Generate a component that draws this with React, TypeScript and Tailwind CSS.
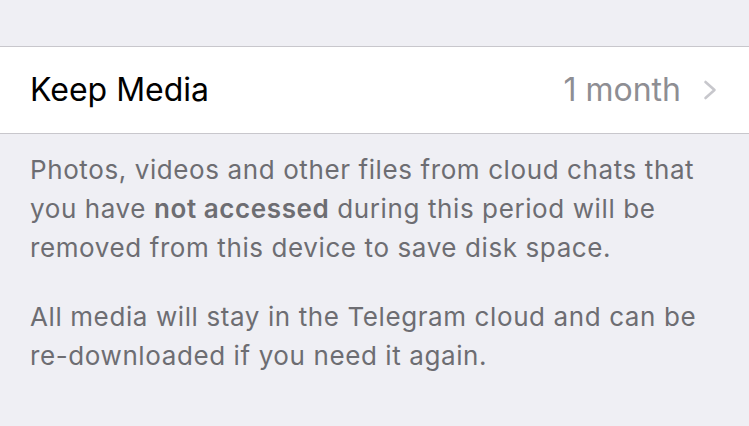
export default function App() {
  return (
    <div
      className="h-[426px] w-[749px] overflow-hidden bg-[#efeff4] pt-[46px]"
      style={{ fontFamily: 'Inter, "Noto Sans", sans-serif' }}
    >
      <div className="flex h-[88px] items-center justify-between border-y border-[#c8c7cc] bg-white pl-[30px] pr-[32px]">
        <span className="text-[32px] text-black">Keep Media</span>
        <div className="flex items-center gap-[22px]">
          <span className="text-[32px] text-[#8e8e93]">1 month</span>
          <svg width="14" height="20" viewBox="0 0 14 20" fill="none">
            <path d="M2.5 2l9 8-9 8" stroke="#c7c7cc" strokeWidth="2.6" strokeLinecap="round" strokeLinejoin="round" />
          </svg>
        </div>
      </div>
      <div className="px-[30px] pt-[16px] text-[26px] leading-[39px] tracking-[0.6px] whitespace-nowrap text-[#6d6d72]">
        <p>
          Photos, videos and other files from cloud chats that
          <br />
          you have <b className="font-semibold">not accessed</b> during this period will be
          <br />
          removed from this device to save disk space.
        </p>
        <p className="mt-[30px]">
          All media will stay in the Telegram cloud and can be
          <br />
          re-downloaded if you need it again.
        </p>
      </div>
    </div>
  );
}
